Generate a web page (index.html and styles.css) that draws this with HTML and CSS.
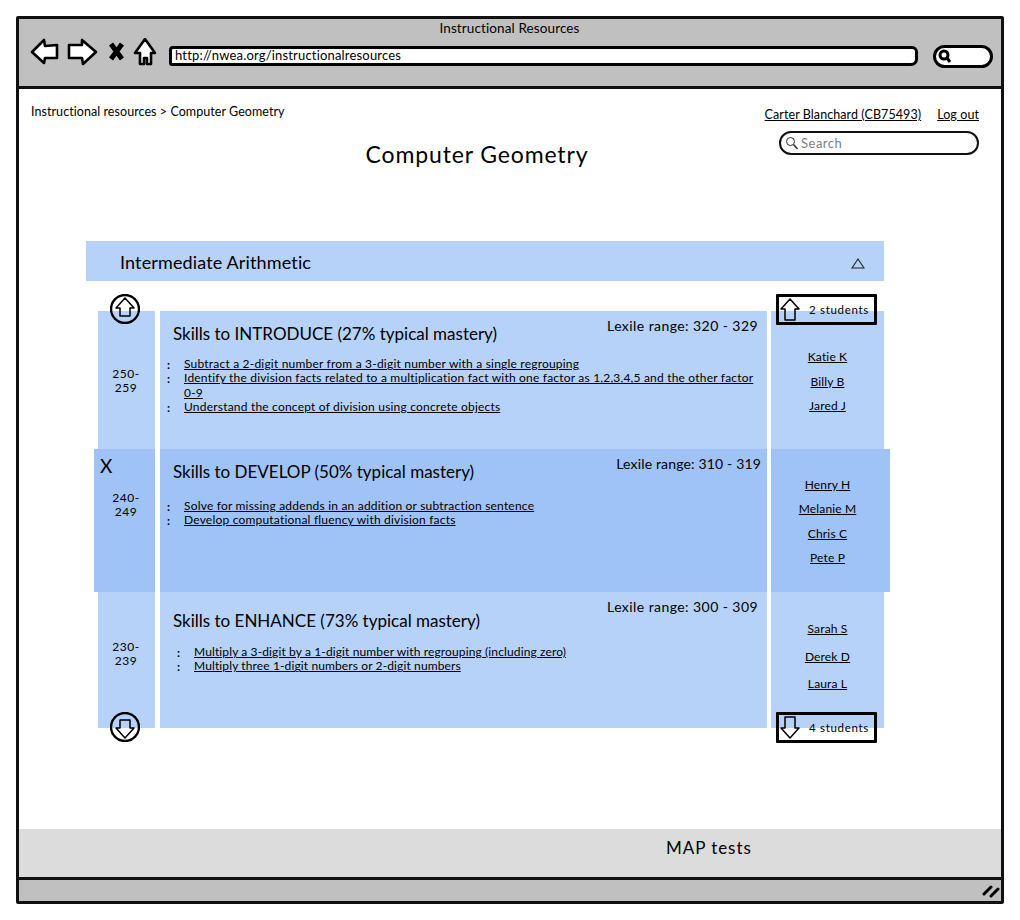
FILE: index.html
```html
<!DOCTYPE html>
<html lang="en">
<head>
<meta charset="utf-8">
<title>Instructional Resources</title>
<link rel="stylesheet" href="styles.css">
</head>
<body>
<div class="window">
  <header class="toolbar">
    <div class="win-title">Instructional Resources</div>
    <div class="nav-row">
      <svg class="nav-icons" width="130" height="36" viewBox="30 38 130 36">
        <path class="ico" d="M32 52 L44 40 L45 46 L57 45 L57 58 L45 58 L44 63 Z"/>
        <path class="ico" d="M96 52 L82 40 L82 45 L69 45 L69 58 L82 58 L83 64 Z"/>
        <path class="ico-x" d="M111 44 L122 59 M122 44 L111 59"/>
        <path class="ico" d="M145 39 L135 53 L140 53 L140 64 L144 64 L144 58 L147 58 L147 64 L151 64 L151 53 L155 53 Z"/>
      </svg>
      <div class="url">http://nwea.org/instructionalresources</div>
      <div class="browser-search">
        <svg width="16" height="16" viewBox="0 0 16 16"><circle class="mag" cx="7" cy="7" r="4"/><path class="mag-h" d="M10 10 L13 14"/></svg>
      </div>
    </div>
  </header>

  <main class="page">
    <div class="top">
      <div class="top-left">
        <div class="crumb">Instructional resources &gt; Computer Geometry</div>
        <h1 class="title">Computer Geometry</h1>
      </div>
      <div class="top-right">
        <div class="links"><a href="#">Carter Blanchard (CB75493)</a><a href="#">Log out</a></div>
        <div class="search">
          <svg width="14" height="14" viewBox="0 0 14 14"><circle class="lens" cx="5.5" cy="5.5" r="4"/><path class="lens-h" d="M8.5 8.5 L12.5 13"/></svg>
          <span>Search</span>
        </div>
      </div>
    </div>

    <div class="section-bar">
      <span class="section-name">Intermediate Arithmetic</span>
      <svg width="14" height="11" viewBox="0 0 14 11"><path class="tri" d="M7 1 L13 10 L1 10 Z"/></svg>
    </div>

    <div class="table">
      <div class="row row-a">
        <div class="range"><span class="range-text">250-<br>259</span></div>
        <div class="skills">
          <div class="lexile">Lexile range: 320 - 329</div>
          <h2>Skills to INTRODUCE (27% typical mastery)</h2>
          <ul>
            <li><a href="#">Subtract a 2-digit number from a 3-digit number with a single regrouping</a></li>
            <li><a href="#">Identify the division facts related to a multiplication fact with one factor as 1,2,3,4,5 and the other factor 0-9</a></li>
            <li><a href="#">Understand the concept of division using concrete objects</a></li>
          </ul>
        </div>
        <div class="students"><a href="#">Katie K</a><a href="#">Billy B</a><a href="#">Jared J</a></div>
      </div>

      <div class="row row-b current">
        <div class="range"><span class="x">X</span><span class="range-text">240-<br>249</span></div>
        <div class="skills">
          <div class="lexile">Lexile range: 310 - 319</div>
          <h2>Skills to DEVELOP (50% typical mastery)</h2>
          <ul>
            <li><a href="#">Solve for missing addends in an addition or subtraction sentence</a></li>
            <li><a href="#">Develop computational fluency with division facts</a></li>
          </ul>
        </div>
        <div class="students"><a href="#">Henry H</a><a href="#">Melanie M</a><a href="#">Chris C</a><a href="#">Pete P</a></div>
      </div>

      <div class="row row-c">
        <div class="range"><span class="range-text">230-<br>239</span></div>
        <div class="skills">
          <div class="lexile">Lexile range: 300 - 309</div>
          <h2>Skills to ENHANCE (73% typical mastery)</h2>
          <ul>
            <li><a href="#">Multiply a 3-digit by a 1-digit number with regrouping (including zero)</a></li>
            <li><a href="#">Multiply three 1-digit numbers or 2-digit numbers</a></li>
          </ul>
        </div>
        <div class="students"><a href="#">Sarah S</a><a href="#">Derek D</a><a href="#">Laura L</a></div>
      </div>

      <div class="circle circle-up">
        <svg width="30" height="30" viewBox="0 0 30 30"><circle class="ring" cx="15" cy="15" r="14"/><path class="arrow" d="M15 4 L24 14 L20 14 L20 22 L10 22 L10 14 L6 14 Z"/></svg>
      </div>
      <div class="circle circle-down">
        <svg width="30" height="30" viewBox="0 0 30 30"><circle class="ring" cx="15" cy="15" r="14"/><path class="arrow" d="M15 26 L24 16 L20 16 L20 8 L10 8 L10 16 L6 16 Z"/></svg>
      </div>
      <div class="more more-up">
        <svg width="20" height="23" viewBox="0 0 20 23"><path class="arrow" d="M10 1 L19 11 L15 11 L15 22 L5 22 L5 11 L1 11 Z"/></svg>
        <span>2 students</span>
      </div>
      <div class="more more-down">
        <svg width="20" height="23" viewBox="0 0 20 23"><path class="arrow" d="M10 22 L19 12 L15 12 L15 1 L5 1 L5 12 L1 12 Z"/></svg>
        <span>4 students</span>
      </div>
    </div>
  </main>

  <footer class="tests-bar">MAP tests</footer>
  <div class="status">
    <svg width="18" height="14" viewBox="0 0 18 14"><path class="grip" d="M2 10 L9 3 M9 12 L16 5"/></svg>
  </div>
</div>
</body>
</html>
```
FILE: styles.css
```css
* { box-sizing: border-box; }

html, body { margin: 0; padding: 0; background: #fff; }

body {
  font-family: "Lato", "Open Sans", sans-serif;
  color: #000;
}

a { color: #000; text-decoration: underline; }

.window {
  width: 988px;
  height: 888px;
  margin: 16px 0 0 16px;
  border: 3px solid #111;
  border-radius: 2px;
  display: flex;
  flex-direction: column;
}

/* browser chrome */
.toolbar {
  height: 70px;
  background: #c0c0c0;
  border-bottom: 3px solid #111;
  flex: none;
}

.win-title {
  height: 19px;
  padding-right: 1px;
  line-height: 19px;
  font-size: 13.5px;
  text-align: center;
  letter-spacing: 0.11px;
}

.nav-row {
  height: 36px;
  display: flex;
  align-items: center;
  padding-left: 11px;
}

.nav-icons { flex: none; }

.ico { fill: #fff; stroke: #000; stroke-width: 2.6; stroke-linejoin: round; }
.ico-x { fill: none; stroke: #000; stroke-width: 5; }

.url {
  flex: none;
  width: 749px;
  height: 20px;
  margin-left: 9px;
  padding-left: 3px;
  background: #fff;
  border: 3px solid #000;
  border-radius: 4px 6px 7px 3px;
  font-size: 13px;
  line-height: 13px;
  letter-spacing: 0.18px;
  white-space: nowrap;
}

.browser-search {
  flex: none;
  width: 60px;
  height: 23px;
  margin-left: 15px;
  padding-left: 1px;
  background: #fff;
  border: 3px solid #000;
  border-radius: 12px;
  display: flex;
  align-items: center;
}

.mag { fill: none; stroke: #000; stroke-width: 3; }
.mag-h { stroke: #000; stroke-width: 3; }

/* page */
.page {
  flex: 1;
  min-height: 0;
  background: #fff;
}

.top {
  display: flex;
  justify-content: space-between;
  padding: 15px 22px 0 12px;
  height: 152px;
}

.top-left { width: 730px; }

.crumb {
  font-size: 12.5px;
  line-height: 16px;
  letter-spacing: 0.06px;
}

.title {
  margin: 20px 0 0;
  padding-left: 162px;
  text-align: center;
  font-size: 23px;
  line-height: 28px;
  font-weight: 400;
  letter-spacing: 0.86px;
}

.top-right { width: 214px; flex: none; }

.links {
  display: flex;
  justify-content: flex-end;
  gap: 16px;
  margin-top: 3px;
  font-size: 12.5px;
  line-height: 16px;
  letter-spacing: 0.08px;
  white-space: nowrap;
}

.search {
  width: 200px;
  height: 24px;
  margin: 8px 0 0 auto;
  padding-left: 4px;
  border: 2.5px solid #111;
  border-radius: 12px;
  display: flex;
  align-items: center;
  gap: 2px;
  font-size: 13px;
  color: #7d7d86;
  letter-spacing: 0.5px;
}

.lens { fill: none; stroke: #333; stroke-width: 1; }
.lens-h { stroke: #333; stroke-width: 1.6; }

.section-bar {
  width: 798px;
  height: 40px;
  margin-left: 67px;
  padding: 0 19px 0 34px;
  background: #b6d2f9;
  display: flex;
  align-items: center;
  justify-content: space-between;
  font-size: 18px;
  letter-spacing: 0.14px;
}

.section-name { padding-top: 2px; }

.section-bar svg { margin-top: 4px; }

.tri { fill: none; stroke: #222; stroke-width: 1.1; }

/* table */
.table {
  position: relative;
  width: 790px;
  margin: 30px 0 0 79px;
}

.row { display: flex; }
.row-a { height: 138px; }
.row-b { height: 143px; margin-left: -4px; }
.row-c { height: 136px; }

.range,
.skills,
.students { background: #b6d2f9; }

.current .range,
.current .skills,
.current .students { background: #9fc3f6; }

.range {
  position: relative;
  width: 57px;
  flex: none;
  padding-right: 1px;
  text-align: center;
  font-size: 12px;
  line-height: 13.5px;
  letter-spacing: 0.6px;
}

.current .range { width: 61px; padding-left: 4px; }

.range-text { display: block; }
.row-a .range-text { padding-top: 56px; }
.row-b .range-text { padding-top: 42px; }
.row-c .range-text { padding-top: 48px; }

.x {
  position: absolute;
  left: 6px;
  top: 6px;
  font-size: 19px;
  line-height: 22px;
}

.skills {
  position: relative;
  width: 607px;
  flex: none;
  margin-left: 5px;
  padding-left: 13px;
}

.lexile {
  position: absolute;
  right: 9px;
  top: 6px;
  font-size: 14px;
  line-height: 18px;
  letter-spacing: 0.43px;
}

.row-b .lexile { right: 6px; letter-spacing: 0.16px; }

h2 {
  margin: 0;
  padding-top: 13px;
  font-size: 17px;
  line-height: 20px;
  font-weight: 400;
  letter-spacing: 0;
}

.row-c h2 { padding-top: 19px; }

ul {
  list-style: none;
  margin: 13px 0 0;
  padding: 0 0 0 11px;
  font-size: 12px;
  line-height: 14.4px;
  letter-spacing: 0.2px;
}

.row-b ul { margin-top: 17px; }
.row-c ul { margin-top: 14px; padding-left: 21px; letter-spacing: 0.12px; }

li { position: relative; }

li::before {
  content: ":";
  position: absolute;
  left: -17px;
  top: 1px;
  font-weight: 700;
}

.students {
  width: 113px;
  flex: none;
  margin-left: 4px;
  display: flex;
  flex-direction: column;
  align-items: center;
  font-size: 12px;
  line-height: 16px;
  letter-spacing: 0.15px;
}

.row-a .students { gap: 8.5px; padding-top: 38px; }
.row-b .students { width: 119px; gap: 8.3px; padding: 28px 6px 0 0; }
.row-c .students { gap: 11.5px; padding-top: 29px; }

/* overlays */
.circle { position: absolute; left: 12px; width: 30px; height: 30px; }
.circle-up { top: -17px; }
.circle-down { bottom: -14px; }

.ring { fill: none; stroke: #000; stroke-width: 2.4; }
.arrow { fill: none; stroke: #000; stroke-width: 1.5; stroke-linejoin: round; }

.more {
  position: absolute;
  left: 678px;
  width: 101px;
  height: 31px;
  padding-left: 1px;
  border: 3px solid #000;
  border-radius: 1px;
  display: flex;
  align-items: center;
  font-size: 11.5px;
  letter-spacing: 0.68px;
}

.more svg { flex: none; margin-right: 9px; }
.more-up { top: -17px; }
.more-down { bottom: -15px; }

/* bottom */
.tests-bar {
  flex: none;
  height: 48px;
  padding: 9px 0 0 647px;
  background: #dcdcdc;
  font-size: 17px;
  line-height: 20px;
  letter-spacing: 0.95px;
}

.status {
  flex: none;
  height: 24px;
  background: #c0c0c0;
  border-top: 3px solid #111;
  display: flex;
  justify-content: flex-end;
  align-items: center;
  padding-right: 1px;
}

.grip { stroke: #000; stroke-width: 3; stroke-linecap: round; fill: none; }
```
